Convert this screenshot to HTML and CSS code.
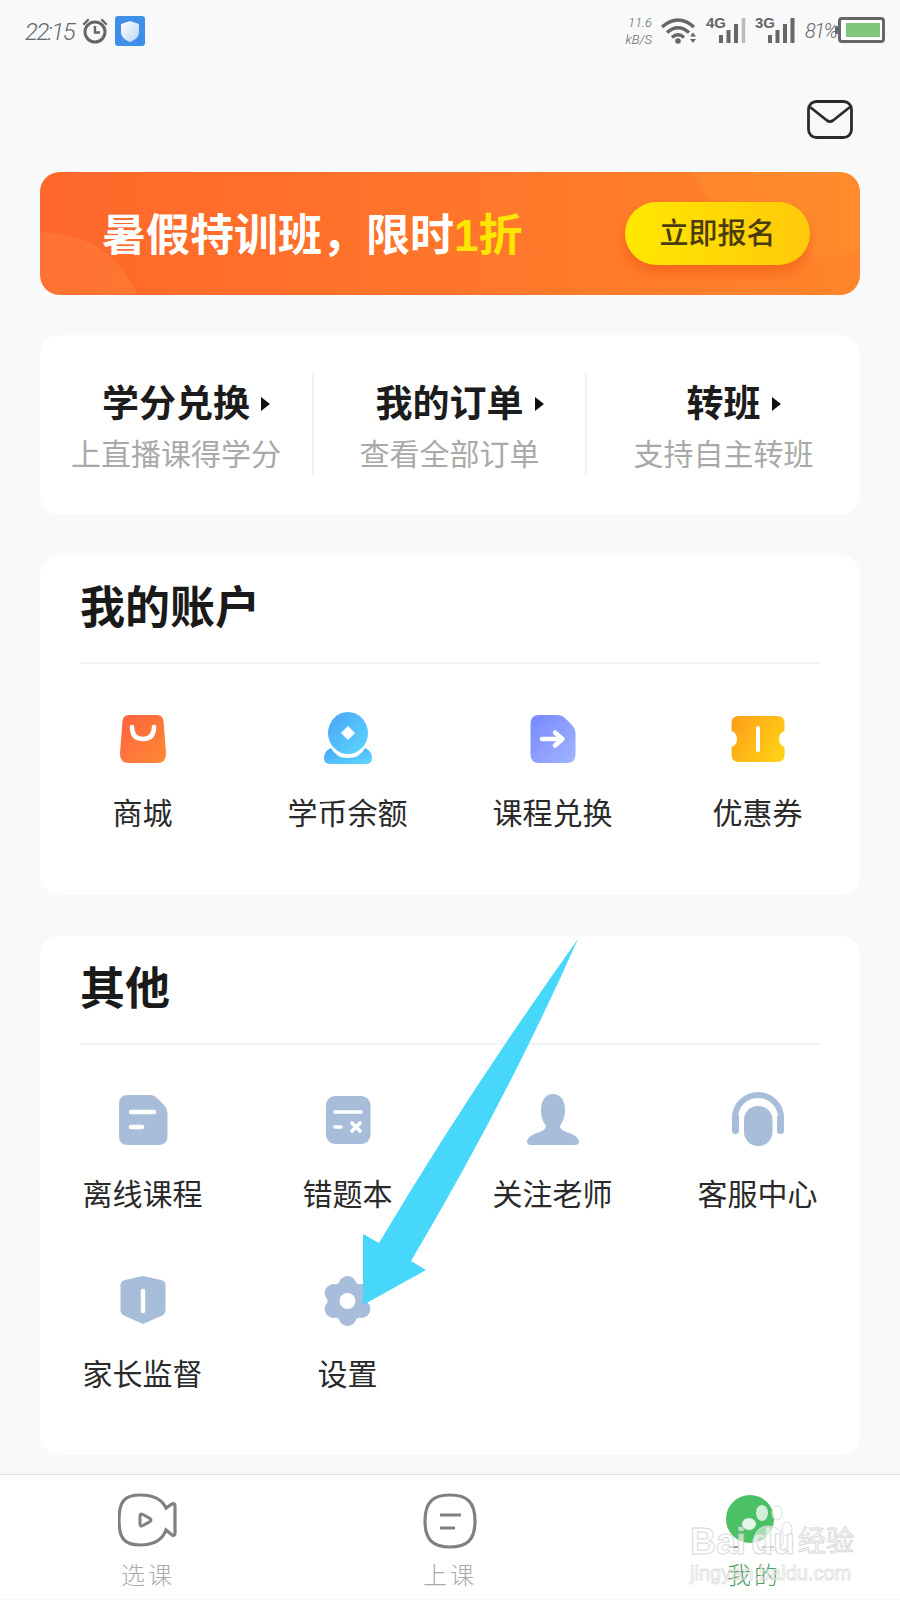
FILE: index.html
```html
<!DOCTYPE html>
<html lang="zh">
<head>
    <meta charset="UTF-8">
    <title>我的</title>
    <link rel="stylesheet" href="styles.css">
</head>
<body>
<div class="page">
    <div class="statusbar">
        <div class="status-left">
            <span class="time">22:15</span>
            <svg class="alarm" width="26" height="26" viewBox="0 0 26 26">
                <circle cx="13" cy="14" r="10" fill="none" stroke="#666" stroke-width="3"/>
                <path d="M13 8v6.5h5" fill="none" stroke="#666" stroke-width="2.4"/>
                <path d="M2 6l4-4M24 6l-4-4" fill="none" stroke="#666" stroke-width="2.4" stroke-linecap="round"/>
            </svg>
            <svg class="guard" width="30" height="30" viewBox="0 0 30 30">
                <defs>
                    <linearGradient id="guardFill" x1="0" y1="0" x2="1" y2="1">
                        <stop offset="0" stop-color="#fff"/>
                        <stop offset="1" stop-color="#b9d5f6"/>
                    </linearGradient>
                </defs>
                <rect width="30" height="30" rx="3" fill="#3f8fe8"/>
                <path d="M15 5l9 3v8c0 5-4 8-9 10-5-2-9-5-9-10V8z" fill="url(#guardFill)"/>
            </svg>
        </div>
        <div class="status-right">
            <div class="speed"><span>11.6</span><span>kB/S</span></div>
            <svg width="36" height="28" viewBox="0 0 36 28">
                <path d="M1 10Q17-4 33 10M6 15.500Q17 6 28 15.500M11 20.500Q17 15 23 20.500" fill="none" stroke="#666" stroke-width="3.400"/>
                <circle cx="17" cy="24" r="2.800" fill="#666"/>
                <path d="M32 15.500l3 4h-6zM32 26l3-4h-6z" fill="#666"/>
            </svg>
            <div class="signal">
                <span class="gen">4G</span>
                <svg width="28" height="26" viewBox="0 0 28 26">
                    <path d="M3 26v-8M10.500 26v-13M18 26v-19" stroke="#666" stroke-width="4"/>
                    <path d="M25.500 26V1" stroke="#bbb" stroke-width="3.500"/>
                </svg>
            </div>
            <div class="signal">
                <span class="gen">3G</span>
                <svg width="28" height="26" viewBox="0 0 28 26">
                    <path d="M3 26v-8M10.500 26v-13M18 26v-19M25.500 26V1" stroke="#666" stroke-width="4"/>
                </svg>
            </div>
            <span class="level">81%</span>
            <svg class="battery" width="50" height="26" viewBox="0 0 50 26">
                <rect x="4.500" y="1.500" width="44" height="23" rx="2.500" fill="#fff" stroke="#666" stroke-width="3"/>
                <rect x="11" y="6" width="34" height="14" fill="#7fc67c"/>
                <rect x="0" y="9" width="3" height="8" rx="1" fill="#666"/>
            </svg>
        </div>
    </div>

    <main class="content">
        <div class="mailrow">
            <svg width="46" height="39" viewBox="0 0 46 39">
                <rect x="1.500" y="1.500" width="43" height="36" rx="8" fill="none" stroke="#2b2b2b" stroke-width="2.800"/>
                <path d="M3 7l17 13.500q3 2.200 6 0L43 7" fill="none" stroke="#2b2b2b" stroke-width="2.800"/>
            </svg>
        </div>

        <div class="banner">
            <div class="banner-text">暑假特训班&#xFF0C;限时<em>1折</em></div>
            <div class="banner-btn">立即报名</div>
        </div>

        <section class="card stats">
            <div class="stat">
                <div class="stat-title">学分兑换</div>
                <div class="stat-sub">上直播课得学分</div>
            </div>
            <div class="stat">
                <div class="stat-title">我的订单</div>
                <div class="stat-sub">查看全部订单</div>
            </div>
            <div class="stat">
                <div class="stat-title">转班</div>
                <div class="stat-sub">支持自主转班</div>
            </div>
        </section>

        <section class="card">
            <h2 class="card-title">我的账户</h2>
            <div class="grid">
                <div class="item">
                    <svg width="56" height="56" viewBox="0 0 56 56">
                        <defs>
                            <linearGradient id="shopFill" x1="0" y1="0" x2="1" y2="1">
                                <stop offset="0" stop-color="#ff6240"/>
                                <stop offset="1" stop-color="#ff8a34"/>
                            </linearGradient>
                        </defs>
                        <path d="M14 4H42Q48 4 48.500 10L51 42Q51.500 52 42 52H14Q4.500 52 5 42L7.500 10Q8 4 14 4Z" fill="url(#shopFill)"/>
                        <path d="M17 16Q17 28 28 28Q39 28 39 16" fill="none" stroke="#fff" stroke-width="4.500" stroke-linecap="round"/>
                    </svg>
                    <span>商城</span>
                </div>
                <div class="item">
                    <svg width="56" height="56" viewBox="0 0 56 56">
                        <defs>
                            <linearGradient id="coinFill" x1="0" y1="0" x2="1" y2="1">
                                <stop offset="0" stop-color="#4aa4f6"/>
                                <stop offset="1" stop-color="#5cd8ff"/>
                            </linearGradient>
                        </defs>
                        <ellipse cx="28" cy="22" rx="20" ry="21" fill="url(#coinFill)"/>
                        <path d="M28 15l7 7-7 7-7-7z" fill="#fff"/>
                        <path d="M11 37Q16 47 28 47Q40 47 45 37Q52 40 52 47Q52 53 46 53H10Q4 53 4 47Q4 40 11 37Z" fill="url(#coinFill)"/>
                    </svg>
                    <span>学币余额</span>
                </div>
                <div class="item">
                    <svg width="56" height="56" viewBox="0 0 56 56">
                        <defs>
                            <linearGradient id="swapFill" x1="0" y1="0" x2="1" y2="1">
                                <stop offset="0" stop-color="#7688ff"/>
                                <stop offset="1" stop-color="#a2b4ff"/>
                            </linearGradient>
                        </defs>
                        <path d="M14 4H33Q37 4 40 7L47 14Q50.500 18 50.500 22V43Q50.500 52 42 52H14Q5.500 52 5.500 43V13Q5.500 4 14 4Z" fill="url(#swapFill)"/>
                        <path d="M17 28H36M30 21.500L37.500 28L30 34.500" fill="none" stroke="#fff" stroke-width="4.500" stroke-linecap="round" stroke-linejoin="round"/>
                    </svg>
                    <span>课程兑换</span>
                </div>
                <div class="item">
                    <svg width="56" height="56" viewBox="0 0 56 56">
                        <defs>
                            <linearGradient id="ticketFill" x1="0" y1="0" x2="1" y2="0.600">
                                <stop offset="0" stop-color="#ff9c1a"/>
                                <stop offset="1" stop-color="#ffcf14"/>
                            </linearGradient>
                        </defs>
                        <path d="M9 5H47Q54.500 5 54.500 12V20Q49 22 49 28Q49 34 54.500 36V44Q54.500 51 47 51H9Q1.500 51 1.500 44V36Q7 34 7 28Q7 22 1.500 20V12Q1.500 5 9 5Z" fill="url(#ticketFill)"/>
                        <path d="M28 17V39" stroke="#fff" stroke-width="4" stroke-linecap="round"/>
                    </svg>
                    <span>优惠券</span>
                </div>
            </div>
        </section>

        <section class="card last">
            <h2 class="card-title">其他</h2>
            <div class="grid">
                <div class="item">
                    <svg width="56" height="56" viewBox="0 0 56 56">
                        <path d="M13 3H35Q39 3 42 6L49 13Q52.500 17 52.500 21V44Q52.500 53 43 53H13Q4 53 4 44V12Q4 3 13 3Z" fill="#a7bdd9"/>
                        <path d="M16 20H39M16 35H27" stroke="#fff" stroke-width="4.500" stroke-linecap="round"/>
                    </svg>
                    <span>离线课程</span>
                </div>
                <div class="item">
                    <svg width="56" height="56" viewBox="0 0 56 56">
                        <rect x="6" y="4" width="44.500" height="48" rx="9" fill="#a7bdd9"/>
                        <path d="M15 20H41M15 35H21" stroke="#fff" stroke-width="3.600" stroke-linecap="round"/>
                        <path d="M32 31L40 39M40 31L32 39" stroke="#fff" stroke-width="3.600" stroke-linecap="round"/>
                    </svg>
                    <span>错题本</span>
                </div>
                <div class="item">
                    <svg width="56" height="56" viewBox="0 0 56 56">
                        <path d="M28 2C36 2 40 9 40 18C40 26 37 31 35 34C35 37 38 39 44 41C50 43 54 46 54 50C54 52 52 53 50 53H6C4 53 2 52 2 50C2 46 6 43 12 41C18 39 21 37 21 34C19 31 16 26 16 18C16 9 20 2 28 2Z" fill="#a7bdd9"/>
                    </svg>
                    <span>关注老师</span>
                </div>
                <div class="item">
                    <svg width="56" height="56" viewBox="0 0 56 56">
                        <path d="M5 26A23 23 0 0 1 51 26" fill="none" stroke="#a7bdd9" stroke-width="6"/>
                        <rect x="2" y="22" width="7" height="20" rx="3.500" fill="#a7bdd9"/>
                        <rect x="47" y="22" width="7" height="20" rx="3.500" fill="#a7bdd9"/>
                        <rect x="14" y="14" width="28.500" height="40" rx="14" fill="#a7bdd9"/>
                    </svg>
                    <span>客服中心</span>
                </div>
                <div class="item">
                    <svg width="56" height="56" viewBox="0 0 56 56">
                        <path d="M28 4L46 8Q50.500 9 50.500 13V38Q50.500 42 46 44L28 52L10 44Q5.500 42 5.500 38V13Q5.500 9 10 8Z" fill="#a7bdd9"/>
                        <path d="M28 19V39" stroke="#fff" stroke-width="4.500" stroke-linecap="round"/>
                    </svg>
                    <span>家长监督</span>
                </div>
                <div class="item">
                    <svg width="56" height="56" viewBox="0 0 56 56">
                        <g fill="#a7bdd9">
                            <circle cx="27.500" cy="29" r="20"/>
                            <circle cx="27.500" cy="13" r="9"/>
                            <circle cx="41.400" cy="21" r="9"/>
                            <circle cx="41.400" cy="37" r="9"/>
                            <circle cx="27.500" cy="45" r="9"/>
                            <circle cx="13.600" cy="37" r="9"/>
                            <circle cx="13.600" cy="21" r="9"/>
                        </g>
                        <circle cx="27.500" cy="29" r="8" fill="#fff"/>
                    </svg>
                    <span>设置</span>
                </div>
            </div>
        </section>
    </main>

    <nav class="tabbar">
        <div class="tab">
            <svg width="60" height="58" viewBox="2 0 60 58">
                <path d="M24 3C36 3 46 7 50 16L56 12Q59 10.500 59 14V41Q59 44.500 56 43L50 38C46 49 36 53 24 53C9 53 3 47 3 28C3 9 9 3 24 3Z" fill="none" stroke="#808080" stroke-width="3.200"/>
                <path d="M24 24Q24 21 27 22.500L34 26.500Q36 28 34 29.500L27 33.500Q24 35 24 32Z" fill="none" stroke="#808080" stroke-width="3"/>
            </svg>
            <span>选课</span>
        </div>
        <div class="tab">
            <svg width="60" height="58" viewBox="0 0 60 58">
                <path d="M30 3C47 3 55 10 55 29C55 48 47 55 30 55C13 55 5 48 5 29C5 10 13 3 30 3Z" fill="none" stroke="#808080" stroke-width="3.200"/>
                <path d="M20 23H41M20 36H35" stroke="#808080" stroke-width="3"/>
            </svg>
            <span>上课</span>
        </div>
        <div class="tab active">
            <svg width="60" height="58" viewBox="0 0 60 58">
                <circle cx="28" cy="27" r="24" fill="#4cc065"/>
                <path d="M7 55H16M40 55H52" stroke="#777" stroke-width="1.500"/>
            </svg>
            <span>我的</span>
        </div>
    </nav>

    <svg class="pointer" width="225" height="375" viewBox="0 0 225 375">
        <path d="M218 4Q146 166 51 326L66 335L3 370V299L19 308Q108 158 218 4Z" fill="#47d7fb"/>
    </svg>

    <div class="watermark">
        <svg class="paw" width="70" height="60" viewBox="0 0 70 60">
            <ellipse cx="22" cy="13" rx="6" ry="8" fill="#fff" fill-opacity=".75"/>
            <ellipse cx="37" cy="13" rx="5" ry="7" fill="#fff" fill-opacity=".6" stroke="#ddd"/>
            <ellipse cx="9" cy="24" rx="7" ry="6" fill="#fff" fill-opacity=".85"/>
            <ellipse cx="47" cy="29" rx="5" ry="7" fill="#fff" fill-opacity=".6" stroke="#ddd"/>
            <path d="M28 26c10 0 17 8 15 17-2 7-10 8-15 7-8 0-14-3-14-10 0-7 6-14 14-14z" fill="#fff" fill-opacity=".5" stroke="#ddd"/>
        </svg>
        <div class="wm-logo"><span>Bai</span><span>du</span><span class="wm-cn">经验</span></div>
        <div class="wm-url">jingyan.baidu.com</div>
    </div>
</div>
</body>
</html>
```

FILE: styles.css
```css
* {
    box-sizing: border-box;
}

html, body {
    margin: 0;
    padding: 0;
}

body {
    font-family: "Liberation Sans", "Noto Sans CJK SC", sans-serif;
    background-color: #f8f9fb;
    color: #222;
}

svg {
    display: block;
}

.page {
    position: relative;
    width: 900px;
    height: 1600px;
    overflow: hidden;
}

/* status bar */
.statusbar {
    display: flex;
    justify-content: space-between;
    height: 60px;
    padding: 16px 15px 0 25px;
    color: #666;
}

.status-left {
    display: flex;
    align-items: flex-start;
}

.time {
    width: 46px;
    margin-top: 2px;
    font-family: Roboto, sans-serif;
    font-size: 24px;
    font-style: italic;
    font-weight: 300;
    line-height: 28px;
    letter-spacing: -1.5px;
    white-space: nowrap;
}

.alarm {
    margin: 2px 0 0 11px;
}

.guard {
    margin-left: 7px;
}

.status-right {
    display: flex;
    align-items: flex-start;
    gap: 9px;
    padding-top: 1px;
}

.speed {
    display: flex;
    flex-direction: column;
    align-items: flex-end;
    font-family: Roboto, sans-serif;
    font-size: 13px;
    font-style: italic;
    font-weight: 300;
    line-height: 17px;
    margin-top: -3px;
}

.signal {
    display: flex;
    width: 40px;
}

.gen {
    width: 12px;
    font-size: 15px;
    font-weight: bold;
    line-height: 12px;
    white-space: nowrap;
}

.level {
    width: 28px;
    margin-left: 1px;
    font-family: Roboto, sans-serif;
    font-size: 20px;
    font-style: italic;
    font-weight: 300;
    line-height: 28px;
    letter-spacing: -1.5px;
    white-space: nowrap;
}

.battery {
    margin-left: -7px;
}

/* main column */
.content {
    padding: 0 40px;
}

.mailrow {
    display: flex;
    justify-content: flex-end;
    padding: 40px 7px 33px 0;
}

.banner {
    display: flex;
    align-items: center;
    justify-content: space-between;
    height: 123px;
    padding: 0 50px 0 62px;
    border-radius: 20px;
    background:
        radial-gradient(circle 138px at 780px -52px, rgba(255, 170, 50, .18) 99%, transparent 100%),
        radial-gradient(circle 100px at 5px 160px, rgba(255, 150, 70, .25) 99%, transparent 100%),
        linear-gradient(90deg, #ff672b, #ff842b);
}

.banner-text {
    padding-bottom: 4px;
    font-size: 44px;
    font-weight: bold;
    color: #fff;
    white-space: nowrap;
}

.banner-text em {
    font-style: normal;
    color: #ffe600;
}

.banner-btn {
    width: 185px;
    height: 63px;
    border-radius: 32px;
    background: linear-gradient(90deg, #ffe800, #ffc90a);
    box-shadow: 0 8px 12px rgba(235, 85, 20, .55);
    color: #4c3b0d;
    font-size: 29px;
    font-weight: 500;
    line-height: 64px;
    text-align: center;
}

.card {
    margin-top: 40px;
    border-radius: 20px;
    background-color: #fff;
}

.card.last {
    margin-top: 41px;
}

/* three link columns */
.stats {
    display: grid;
    grid-template-columns: 272px 273px 275px;
    height: 180px;
    padding: 39px 0 0;
}

.stat {
    height: 101px;
    padding-top: 9px;
    text-align: center;
    border-left: 2px solid #f0f1f3;
}

.stat:first-child {
    border-left: 0;
}

.stat-title {
    font-size: 37px;
    font-weight: bold;
    line-height: 44px;
    color: #1c1c1c;
}

.stat-title::after {
    content: "";
    display: inline-block;
    width: 0;
    height: 0;
    margin: 0 -20px 6px 11px;
    border-left: 9px solid #111;
    border-top: 7px solid transparent;
    border-bottom: 7px solid transparent;
}

.stat-sub {
    margin-top: 7px;
    font-size: 30px;
    line-height: 42px;
    color: #a9a9a9;
}

/* account + other cards */
.card-title {
    height: 109px;
    margin: 0 40px;
    border-bottom: 2px solid #f3f4f6;
    font-size: 45px;
    font-weight: bold;
    line-height: 108px;
    color: #1a1a1a;
}

.grid {
    display: grid;
    grid-template-columns: repeat(4, 1fr);
    row-gap: 55px;
    padding: 47px 0 59px;
}

.item {
    display: flex;
    flex-direction: column;
    align-items: center;
    gap: 25px;
    font-size: 30px;
    line-height: 44px;
    color: #2a2a2a;
    white-space: nowrap;
}

.last .grid {
    padding-bottom: 58px;
}

/* bottom nav */
.tabbar {
    display: flex;
    justify-content: space-between;
    height: 125px;
    margin-top: 19px;
    padding: 17px 98px 0;
    border-top: 1px solid #dfe0e2;
    background-color: #fff;
}

.tab {
    display: flex;
    flex-direction: column;
    align-items: center;
    gap: 10px;
    width: 100px;
    font-size: 24px;
    font-weight: 300;
    line-height: 32px;
    letter-spacing: 3px;
    color: #aaa;
}

.tab.active {
    color: #4f9e5e;
}

.tab.active span {
    padding-left: 4px;
}

/* overlays */
.pointer {
    position: absolute;
    left: 360px;
    top: 935px;
}

.watermark {
    position: absolute;
    left: 690px;
    top: 1500px;
    width: 165px;
    padding-top: 25px;
}

.paw {
    position: absolute;
    left: 50px;
    top: 0;
}

.wm-logo {
    position: relative;
    display: flex;
    align-items: center;
    height: 34px;
    font-size: 36px;
    font-weight: bold;
    line-height: 34px;
    white-space: nowrap;
    color: rgba(255, 255, 255, .6);
    -webkit-text-stroke: 1px rgba(200, 200, 200, .7);
}

.wm-logo span:nth-child(2) {
    margin-left: 5px;
}

.wm-cn {
    margin-left: 3px;
    font-size: 28px;
    font-weight: normal;
}

.wm-url {
    position: relative;
    margin-top: 3px;
    font-size: 20px;
    line-height: 22px;
    color: rgba(255, 255, 255, .5);
    -webkit-text-stroke: 1px rgba(205, 205, 205, .6);
    white-space: nowrap;
}
```
